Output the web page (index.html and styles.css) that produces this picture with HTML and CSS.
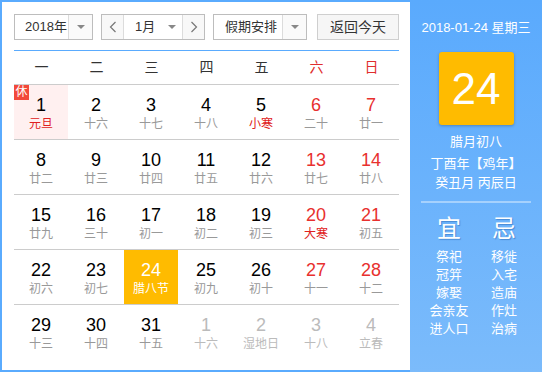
FILE: index.html
```html
<!DOCTYPE html>
<html lang="zh">
<head>
<meta charset="utf-8">
<link rel="stylesheet" href="styles.css">
</head>
<body>
<div class="widget">
  <div class="main">
    <div class="controls">
      <div class="sel year">
        <span class="sel-text">2018年</span>
        <span class="sel-arrow"><i class="tri"></i></span>
      </div>
      <div class="sel month">
        <span class="nav"><svg width="8" height="12" viewBox="0 0 8 12"><polyline points="6.5,1 1.5,6 6.5,11" fill="none" stroke="#777" stroke-width="1.2"/></svg></span>
        <span class="month-field"><span class="m-text">1月</span><i class="tri"></i></span>
        <span class="nav next"><svg width="8" height="12" viewBox="0 0 8 12"><polyline points="1.5,1 6.5,6 1.5,11" fill="none" stroke="#777" stroke-width="1.2"/></svg></span>
      </div>
      <div class="sel holiday">
        <span class="sel-text">假期安排</span>
        <span class="sel-arrow"><i class="tri"></i></span>
      </div>
      <div class="btn-today">返回今天</div>
    </div>
    <div class="cal">
      <div class="head">
        <span>一</span><span>二</span><span>三</span><span>四</span><span>五</span><span class="red">六</span><span class="red">日</span>
      </div>
      <div class="row">
        <div class="cell holi"><span class="badge">休</span><b>1</b><em class="term">元旦</em></div>
        <div class="cell"><b>2</b><em>十六</em></div>
        <div class="cell"><b>3</b><em>十七</em></div>
        <div class="cell"><b>4</b><em>十八</em></div>
        <div class="cell"><b>5</b><em class="term">小寒</em></div>
        <div class="cell wk"><b>6</b><em>二十</em></div>
        <div class="cell wk"><b>7</b><em>廿一</em></div>
      </div>
      <div class="row">
        <div class="cell"><b>8</b><em>廿二</em></div>
        <div class="cell"><b>9</b><em>廿三</em></div>
        <div class="cell"><b>10</b><em>廿四</em></div>
        <div class="cell"><b>11</b><em>廿五</em></div>
        <div class="cell"><b>12</b><em>廿六</em></div>
        <div class="cell wk"><b>13</b><em>廿七</em></div>
        <div class="cell wk"><b>14</b><em>廿八</em></div>
      </div>
      <div class="row">
        <div class="cell"><b>15</b><em>廿九</em></div>
        <div class="cell"><b>16</b><em>三十</em></div>
        <div class="cell"><b>17</b><em>初一</em></div>
        <div class="cell"><b>18</b><em>初二</em></div>
        <div class="cell"><b>19</b><em>初三</em></div>
        <div class="cell wk"><b>20</b><em class="term">大寒</em></div>
        <div class="cell wk"><b>21</b><em>初五</em></div>
      </div>
      <div class="row">
        <div class="cell"><b>22</b><em>初六</em></div>
        <div class="cell"><b>23</b><em>初七</em></div>
        <div class="cell today"><b>24</b><em>腊八节</em></div>
        <div class="cell"><b>25</b><em>初九</em></div>
        <div class="cell"><b>26</b><em>初十</em></div>
        <div class="cell wk"><b>27</b><em>十一</em></div>
        <div class="cell wk"><b>28</b><em>十二</em></div>
      </div>
      <div class="row last">
        <div class="cell"><b>29</b><em>十三</em></div>
        <div class="cell"><b>30</b><em>十四</em></div>
        <div class="cell"><b>31</b><em>十五</em></div>
        <div class="cell other"><b>1</b><em>十六</em></div>
        <div class="cell other"><b>2</b><em>湿地日</em></div>
        <div class="cell other"><b>3</b><em>十八</em></div>
        <div class="cell other"><b>4</b><em>立春</em></div>
      </div>
    </div>
  </div>
  <div class="panel">
    <div class="p-date">2018-01-24 星期三</div>
    <div class="p-day">24</div>
    <div class="p-lunar">
      <div class="l1">腊月初八</div>
      <div>丁酉年【鸡年】</div>
      <div>癸丑月 丙辰日</div>
    </div>
    <div class="p-sep"></div>
    <div class="p-yiji">
      <div class="col">
        <div class="big">宜</div>
        <div>祭祀</div><div>冠笄</div><div>嫁娶</div><div>会亲友</div><div>进人口</div>
      </div>
      <div class="col">
        <div class="big">忌</div>
        <div>移徙</div><div>入宅</div><div>造庙</div><div>作灶</div><div>治病</div>
      </div>
    </div>
  </div>
</div>
</body>
</html>
```

FILE: styles.css
```css
* { box-sizing: border-box; }
html, body { margin: 0; padding: 0; background: #fff; }
body {
  font-family: "Liberation Sans", "Noto Sans CJK SC", sans-serif;
  color: #333;
}
.widget {
  display: flex;
  width: 542px;
  height: 372px;
}
.main {
  width: 410px;
  height: 372px;
  border: 2px solid #5aabfe;
  border-right: none;
  padding: 12px 11px 0 12px;
}
.controls {
  display: flex;
  height: 26px;
  font-size: 13px;
}
.sel {
  display: flex;
  height: 26px;
  border: 1px solid #bdbdbd;
  background: #fff;
}
.year { width: 79px; margin-right: 8px; }
.month { width: 104px; margin-right: 8px; }
.holiday { width: 94px; margin-right: 10px; }
.sel-text {
  flex: 1;
  line-height: 24px;
  padding-left: 10px;
}
.holiday .sel-text { padding-left: 11px; }
.sel-arrow {
  width: 24px;
  border-left: 1px solid #dcdcdc;
  display: flex;
  align-items: center;
  justify-content: center;
  background: #fafafa;
}
.tri {
  display: block;
  width: 0;
  height: 0;
  border-left: 4px solid transparent;
  border-right: 4px solid transparent;
  border-top: 4px solid #888;
}
.nav {
  width: 22px;
  display: flex;
  align-items: center;
  justify-content: center;
  background: #f8f8f8;
  border-right: 1px solid #dcdcdc;
}
.nav.next { border-right: none; border-left: 1px solid #dcdcdc; }
.month-field {
  flex: 1;
  display: flex;
  align-items: center;
  padding-left: 11px;
}
.m-text { line-height: 24px; width: 33px; }
.btn-today {
  width: 82px;
  height: 26px;
  border: 1px solid #cfcfcf;
  background: #f6f6f6;
  text-align: center;
  line-height: 24px;
  font-size: 14px;
}
.cal {
  margin-top: 10px;
  width: 385px;
  border-top: 1px solid #5aabfe;
}
.head {
  display: grid;
  grid-template-columns: repeat(7, 55px);
  height: 34px;
  border-bottom: 1px solid #cccccc;
  font-size: 14px;
  line-height: 33px;
  text-align: center;
  color: #333;
}
.head .red { color: #e02d2d; }
.row {
  display: grid;
  grid-template-columns: repeat(7, 55px);
  height: 55px;
  border-bottom: 1px solid #cccccc;
}
.row.last { border-bottom: none; }
.cell {
  position: relative;
  width: 54px;
  height: 54px;
  padding-top: 10px;
  text-align: center;
}
.cell b {
  display: block;
  font-weight: normal;
  font-size: 18px;
  line-height: 20px;
  color: #000;
}
.cell em {
  display: block;
  font-style: normal;
  font-size: 12px;
  line-height: 18px;
  color: #999;
}
.cell.wk b { color: #e8302e; }
.cell em.term { color: #e02020; }
.cell.holi { background: #fff0f0; }
.badge {
  position: absolute;
  left: 0;
  top: 0;
  width: 15px;
  height: 15px;
  background: #f2493a;
  color: #fff;
  font-size: 12px;
  line-height: 15px;
  text-align: center;
}
.cell.today { background: #ffbb00; }
.cell.today b, .cell.today em { color: #fff; }
.cell.other b, .cell.other em { color: #bbbbbb; }
.panel {
  width: 132px;
  height: 372px;
  background: linear-gradient(#5aaafd, #7bbbfb);
  color: #fff;
  display: flex;
  flex-direction: column;
  align-items: center;
}
.p-date {
  margin-top: 19px;
  font-size: 13px;
  line-height: 18px;
}
.p-day {
  margin-top: 15px;
  width: 75px;
  height: 73px;
  background: #ffbb00;
  border-radius: 3px;
  box-shadow: 0 1px 3px rgba(0, 0, 0, 0.25);
  font-size: 44px;
  line-height: 73px;
  text-align: center;
}
.p-lunar {
  margin-top: 7px;
  font-size: 13px;
  line-height: 19px;
  text-align: center;
}
.p-lunar .l1 { margin-bottom: 3px; }
.p-sep {
  margin-top: 9px;
  width: 110px;
  height: 2px;
  background: rgba(255, 255, 255, 0.4);
}
.p-yiji {
  display: flex;
  margin-top: 11px;
  margin-left: 1px;
}
.p-yiji .col {
  width: 55px;
  text-align: center;
  font-size: 13px;
  line-height: 18px;
}
.p-yiji .big {
  font-size: 24px;
  line-height: 30px;
  margin-bottom: 4px;
  text-shadow: 1px 1px 1px rgba(0, 60, 140, 0.35);
}
```
